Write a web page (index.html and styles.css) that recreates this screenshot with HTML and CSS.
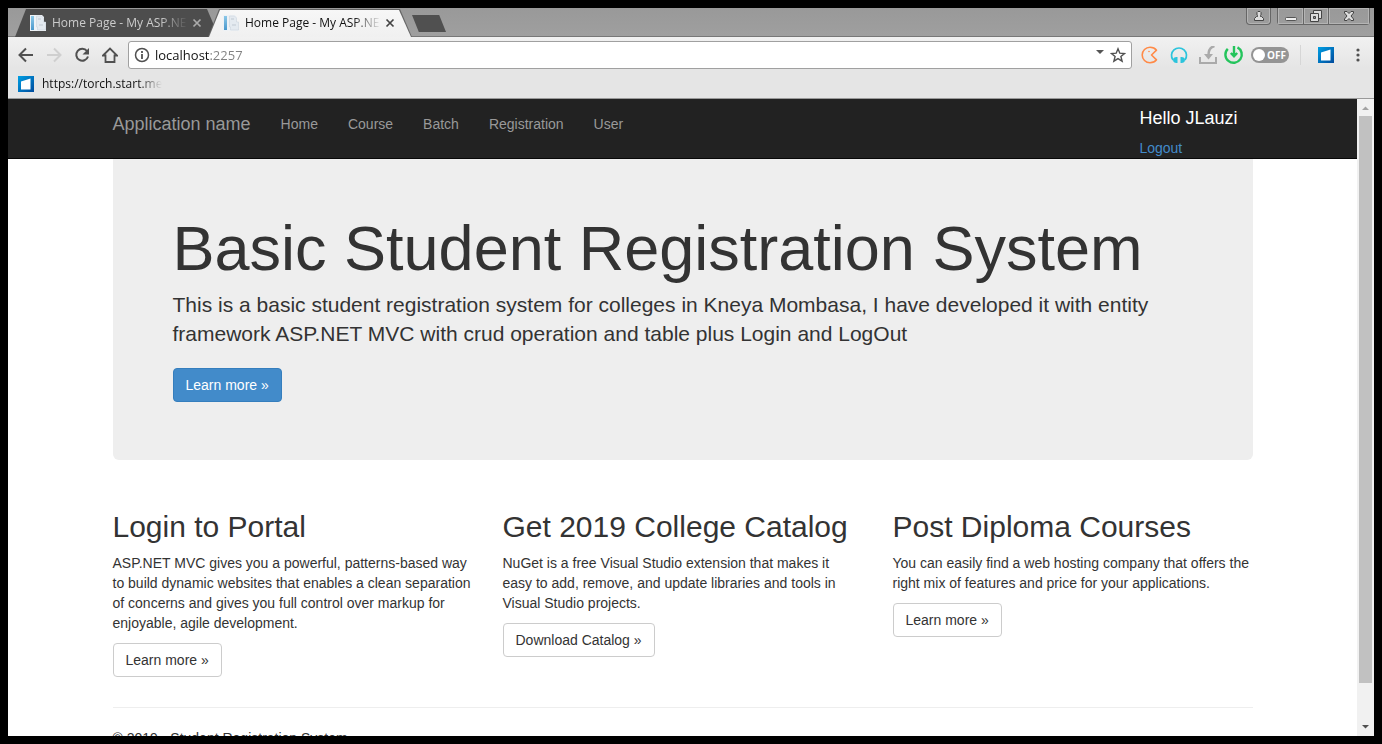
FILE: index.html
```
<!DOCTYPE html>
<html lang="en">
<head>
<meta charset="utf-8">
<title>Home Page - My ASP.NET Application</title>
<link rel="stylesheet" href="styles.css">
</head>
<body>
<svg class="defs" aria-hidden="true">
  <defs>
    <linearGradient id="blue" x1="0" y1="0" x2="1" y2="1"><stop offset="0" stop-color="#00a0e4"/><stop offset="1" stop-color="#004a9c"/></linearGradient>
    <linearGradient id="bar" x1="0" y1="0" x2="0" y2="1"><stop offset="0" stop-color="#8cc8e8"/><stop offset="1" stop-color="#4a98cc"/></linearGradient>
    <symbol id="site" viewBox="0 0 16 16">
      <path d="M0 0h12l2 2v5h2v9H0z" fill="#eef2f6"/>
      <path d="M1 1h3v14H1z" fill="url(#bar)"/>
      <path d="M6.500 1h5l2 2v4h2v8h-8v-3h-1z" fill="#e4eaf0" stroke="#cdd5dd" stroke-width=".6"/>
      <path d="M8 4h3M9 10h4" stroke="#c0c9d2"/>
    </symbol>
    <symbol id="torch" viewBox="0 0 16 16"><path d="M0 0h16v16H0z" fill="url(#blue)"/><path d="M3 5.500l9.500-3V13.500H3z" fill="#fff"/></symbol>
    <symbol id="x" viewBox="0 0 10 10"><path d="M1.500 1.500l7 7m0-7l-7 7" fill="none" stroke="currentColor" stroke-width="1.700"/></symbol>
  </defs>
</svg>
<div class="window">
  <header class="chrome">
    <div class="tabstrip">
      <div class="tab">
        <svg class="i16"><use href="#site"/></svg>
        <span class="tab-title">Home Page - My ASP.NE</span>
        <button class="plain close" aria-label="Close tab"><svg class="i10"><use href="#x"/></svg></button>
      </div>
      <div class="tab active">
        <svg class="i16"><use href="#site"/></svg>
        <span class="tab-title">Home Page - My ASP.NE</span>
        <button class="plain close" aria-label="Close tab"><svg class="i10"><use href="#x"/></svg></button>
      </div>
      <button class="plain newtab" aria-label="New tab"></button>
      <div class="controls">
        <button class="plain ctl user" aria-label="User"><svg width="12" height="12" viewBox="0 0 12 12" fill="#ddd" stroke="#444"><path d="M1.500 10.500v-2l2-2h1V5.500l-.5-.5V2.500l1-1h2l1 1V5l-.5.500v1h1l2 2v2z"/></svg></button>
        <div class="ctl-group">
          <button class="plain ctl" aria-label="Minimise"><svg width="14" height="12" viewBox="0 0 14 12" fill="#eee" stroke="#555"><rect x="1.500" y="7.500" width="11" height="3" rx="1"/></svg></button>
          <button class="plain ctl" aria-label="Restore"><svg width="14" height="14" viewBox="0 0 14 14" fill="#ddd" stroke="#444"><path d="M4.500 1.500h8v8h-8z"/><path d="M1.500 4.500h8v8h-8z"/><path d="M4.500 7.500h2v2h-2z" fill="#999"/></svg></button>
          <button class="plain ctl wide" aria-label="Close"><svg width="12" height="12" viewBox="0 0 12 12" fill="#ddd" stroke="#444"><path d="M1.500 1.500h2.500l2 2 2-2h2.500v1.500L8 6l2.500 3v1.500H8l-2-2-2 2H1.500V9L4 6 1.500 3z"/></svg></button>
        </div>
      </div>
    </div>
    <div class="toolbar">
      <nav class="navbtns" aria-label="Browser">
        <button class="plain" aria-label="Back"><svg class="i16" viewBox="0 0 16 16" fill="none" stroke="#505050" stroke-width="2"><path d="M15 8H2M8 1.500L1.500 8 8 14.500"/></svg></button>
        <button class="plain" aria-label="Forward"><svg class="i16" viewBox="0 0 16 16" fill="none" stroke="#cfcfcf" stroke-width="2"><path d="M1 8h13M8 1.500L14.500 8 8 14.500"/></svg></button>
        <button class="plain" aria-label="Reload"><svg class="i16" viewBox="0 0 16 16"><path d="M13 4A6 6 0 1 0 14 9.500" fill="none" stroke="#505050" stroke-width="2"/><path d="M15 1v6.500H8.500z" fill="#505050"/></svg></button>
        <button class="plain" aria-label="Home page"><svg class="i16" viewBox="0 0 16 16" fill="none" stroke="#505050" stroke-width="1.800"><path d="M1 8.500L8 1.500l7 7h-2.500V15h-9V8.500z"/></svg></button>
      </nav>
      <div class="omnibox">
        <svg class="i16" viewBox="0 0 16 16" fill="none" stroke="#505050" stroke-width="1.500"><circle cx="8" cy="8" r="6.500"/><path d="M8 7v5M8 4v2" stroke-width="1.800"/></svg>
        <input class="url" type="text" aria-label="Address" value="localhost:2257">
        <svg width="8" height="4" viewBox="0 0 8 4" class="drop"><path d="M0 0h8L4 4z" fill="#555"/></svg>
        <button class="plain" aria-label="Bookmark"><svg class="i16" viewBox="0 0 16 16" fill="none" stroke="#505050" stroke-width="1.400"><path d="M8 1.800l1.800 4.400 4.700.3-3.600 3 1.200 4.700L8 11.600l-4.100 2.600 1.200-4.700-3.600-3 4.700-.3z"/></svg></button>
      </div>
      <div class="exts">
        <button class="plain" aria-label="Games"><svg class="i18" viewBox="0 0 18 18" fill="none" stroke="#ff8a47" stroke-width="1.600"><path d="M15.500 4.200C13.500 1.500 11 1.200 9 1.200a7.500 7.500 0 0 0 0 15.600c2 0 4.500-.3 6.500-3L10.500 9z" stroke-linejoin="round"/><circle cx="8" cy="5.500" r=".8" fill="#ff8a47" stroke="none"/></svg></button>
        <button class="plain" aria-label="Music"><svg class="i18" viewBox="0 0 18 18"><path d="M3 14A7.500 7.500 0 1 1 15 14" fill="none" stroke="#2cc4dc" stroke-width="1.700"/><path d="M7.500 11v6H6.500C4.500 17 3 15.800 3 14s1.500-3 3.500-3zM10.500 11v6h1c2 0 3.500-1.200 3.500-3s-1.500-3-3.500-3z" fill="#2cc4dc"/></svg></button>
        <button class="plain" aria-label="Media download"><svg class="i18" viewBox="0 0 18 18" fill="none" stroke="#aaa" stroke-width="2"><path d="M1 11v6h16v-6"/><path d="M15.500 0c-4 1-6 4-6 9" stroke-width="2.400"/><path d="M5 8h9l-4.500 5.500z" fill="#aaa" stroke="none"/></svg></button>
        <button class="plain" aria-label="Downloads"><svg class="i20" viewBox="0 0 20 20" fill="none" stroke="#24c45c" stroke-width="2.400"><path d="M3.800 3.800A8.200 8.200 0 1 0 13.500 2.400M10 1v9.500M6.800 8L10 11.200 13.200 8"/></svg></button>
        <button class="plain toggle" aria-label="Toggle"><span class="knob"></span>OFF</button>
        <span class="sep"></span>
        <button class="plain torch" aria-label="Torch"><svg class="i16"><use href="#torch"/></svg></button>
        <button class="plain" aria-label="Menu"><svg width="4" height="16" viewBox="0 0 4 16" fill="#505050"><circle cx="2" cy="3" r="1.600"/><circle cx="2" cy="8" r="1.600"/><circle cx="2" cy="13" r="1.600"/></svg></button>
      </div>
    </div>
    <div class="bookmarks">
      <a class="bookmark" href="#"><svg class="i16"><use href="#torch"/></svg><span class="bookmark-title">https://torch.start.me</span></a>
    </div>
  </header>
  <div class="viewport">
    <div class="page">
      <nav class="navbar">
        <div class="container bar">
          <a class="brand" href="#">Application name</a>
          <ul class="links">
            <li><a href="#">Home</a></li>
            <li><a href="#">Course</a></li>
            <li><a href="#">Batch</a></li>
            <li><a href="#">Registration</a></li>
            <li><a href="#">User</a></li>
          </ul>
          <div class="account">
            <span class="hello">Hello JLauzi</span>
            <a class="logout" href="#">Logout</a>
          </div>
        </div>
      </nav>
      <main class="container">
        <section class="jumbotron">
          <h1>Basic Student Registration System</h1>
          <p class="lead">This is a basic student registration system for colleges in Kneya Mombasa, I have developed it with entity framework ASP.NET MVC with crud operation and table plus Login and LogOut</p>
          <a class="btn primary" href="#">Learn more »</a>
        </section>
        <div class="columns">
          <section>
            <h2>Login to Portal</h2>
            <p>ASP.NET MVC gives you a powerful, patterns-based way to build dynamic websites that enables a clean separation of concerns and gives you full control over markup for enjoyable, agile development.</p>
            <a class="btn" href="#">Learn more »</a>
          </section>
          <section>
            <h2>Get 2019 College Catalog</h2>
            <p>NuGet is a free Visual Studio extension that makes it easy to add, remove, and update libraries and tools in Visual Studio projects.</p>
            <a class="btn" href="#">Download Catalog »</a>
          </section>
          <section>
            <h2>Post Diploma Courses</h2>
            <p>You can easily find a web hosting company that offers the right mix of features and price for your applications.</p>
            <a class="btn" href="#">Learn more »</a>
          </section>
        </div>
        <footer class="footer"><p>© 2019 - Student Registration System</p></footer>
      </main>
    </div>
    <div class="scrollbar" aria-hidden="true">
      <svg class="arrow" viewBox="0 0 17 17"><path d="M5 11h7L8.500 7.500z" fill="#a3a3a3"/></svg>
      <div class="track"><div class="thumb"></div></div>
      <svg class="arrow" viewBox="0 0 17 17"><path d="M5 6h7L8.500 9.500z" fill="#505050"/></svg>
    </div>
  </div>
</div>
</body>
</html>
```
FILE: styles.css
```
* { box-sizing: border-box; }
body {
  margin: 0;
  background: #000;
  color: #333;
  font: 14px/20px "Liberation Sans", Arial, sans-serif;
}
a { text-decoration: none; color: inherit; }
svg { display: block; flex: none; }
h1, h2, p, ul { margin: 0; padding: 0; font-weight: 400; }
.defs { position: absolute; width: 0; height: 0; }
.i10 { width: 10px; height: 10px; }
.i16 { width: 16px; height: 16px; }
.i18 { width: 18px; height: 18px; }
.i20 { width: 20px; height: 20px; }
.plain { border: 0; padding: 0; background: none; font: inherit; color: inherit; }

.window {
  display: flex;
  flex-direction: column;
  height: 100vh;
  padding: 8px;
}

/* Browser chrome */
.chrome {
  flex: none;
  background: linear-gradient(#f1f1f1 29px, #e5e5e5 60px);
  border-bottom: 1px solid #999;
  color: #111;
  font: 12px/16px "Open Sans", "Noto Sans", sans-serif;
}
.tabstrip {
  display: flex;
  height: 29px;
  padding-left: 7px;
  background: linear-gradient(#999, #9f9f9f);
  border-bottom: 1px solid #777;
}
.tab {
  display: flex;
  align-items: center;
  width: 204px;
  height: 28px;
  margin-top: 1px;
  padding: 0 17px 0 15px;
  background: #4d4d4d;
  color: #ccc;
  clip-path: polygon(11px 0, calc(100% - 12px) 0, 100% 100%, 0 100%);
}
.tab.active {
  position: relative;
  z-index: 1;
  margin-left: -11px;
  background: #666;
  color: #111;
}
.tab.active::before {
  content: "";
  position: absolute;
  z-index: -1;
  inset: 1px 1px 0;
  background: linear-gradient(#f7f7f7, #f0f0f0);
  clip-path: polygon(11px 0, calc(100% - 12px) 0, 100% 100%, 0 100%);
}
.tab-title {
  flex: 1;
  min-width: 0;
  margin: 0 4px 0 6px;
  white-space: nowrap;
  mask-image: linear-gradient(to right, #000 calc(100% - 28px), transparent);
}
.close { color: #aaa; }
.active .close { color: #444; }
.newtab {
  width: 34px;
  height: 17px;
  margin: 7px 0 0;
  background: #505050;
  clip-path: polygon(0 0, 80% 0, 100% 100%, 20% 100%);
}
.controls { display: flex; gap: 6px; margin: 0 4px 0 auto; align-items: flex-start; }
.ctl-group { display: flex; border: 1px solid #666; border-top: 0; border-radius: 0 0 4px 4px; }
.ctl { display: grid; place-items: center; width: 25px; height: 16px; box-shadow: inset 0 0 0 1px #b4b4b4; }
.ctl + .ctl { border-left: 1px solid #666; }
.ctl.wide { width: 41px; }
.ctl.user { height: 17px; border: 1px solid #666; border-top: 0; border-radius: 0 0 4px 4px; }

.toolbar { display: flex; align-items: center; height: 36px; padding: 0 14px 0 10px; }
.navbtns { display: flex; align-items: center; gap: 12px; margin-right: 10px; }
.omnibox {
  display: flex;
  flex: 1;
  align-items: center;
  height: 28px;
  padding: 0 5px;
  background: #fff;
  border: 1px solid #a0a0a0;
  border-radius: 3px;
}
.url {
  flex: 1;
  min-width: 0;
  height: 24px;
  margin-left: 5px;
  padding: 0;
  border: 0;
  outline: 0;
  font: 13px/24px "Open Sans", "Noto Sans", sans-serif;
  color: transparent;
  background: linear-gradient(to right, #111 55px, #808080 55px);
  background-clip: text;
}
.drop { margin: 0 6px 6px 0; }
.exts { display: flex; align-items: center; gap: 11px; margin-left: 9px; }
.exts .i20 { margin: 0 -4px; }
.toggle {
  display: flex;
  align-items: center;
  gap: 2px;
  width: 38px;
  height: 16px;
  padding: 0 2px;
  border-radius: 8px;
  background: #949494;
  color: #fff;
  font-size: 10px;
  line-height: 16px;
  font-weight: 700;
}
.knob { flex: none; width: 12px; height: 12px; border-radius: 50%; background: #fff; }
.sep { width: 1px; height: 20px; background: #d6d6d6; }
.torch { margin: 0 11px 0 6px; }

.bookmarks { display: flex; height: 25px; padding: 3px 10px 0; align-items: flex-start; }
.bookmark { display: flex; gap: 8px; align-items: center; }
.bookmark-title {
  white-space: nowrap;
  mask-image: linear-gradient(to right, #000 calc(100% - 24px), transparent);
}

/* Web page */
.viewport { display: flex; flex: 1; min-height: 0; background: #fff; }
.page { flex: 1; min-width: 0; overflow: hidden; }
.container { max-width: 1170px; margin: 0 auto; padding: 0 15px; }
.navbar { background: #222; border-bottom: 1px solid #080808; color: #999; }
.bar { display: flex; min-height: 59px; }
.brand { padding: 15px 0; margin-right: 15px; font-size: 18px; }
.links { display: flex; list-style: none; }
.links a { display: block; padding: 15px; }
.account { display: flex; flex-direction: column; gap: 10px; margin: 9px 15px 0 auto; }
.hello { color: #fff; font-size: 18px; }
.logout { color: #428bca; }

.jumbotron {
  padding: 58px 60px;
  margin-bottom: 50px;
  background: #eee;
  border-radius: 0 0 6px 6px;
}
h1 { font-size: 63px; line-height: 63px; margin-bottom: 10px; }
.lead { font-size: 21px; line-height: 29px; margin-bottom: 20px; }
.btn {
  display: inline-block;
  padding: 6px 12px;
  border: 1px solid #ccc;
  border-radius: 4px;
  background: #fff;
  color: #333;
  vertical-align: top;
}
.btn.primary { background: #428bca; border-color: #357ebd; color: #fff; }
.columns { display: grid; grid-template-columns: repeat(3, 1fr); gap: 30px; }
h2 { font-size: 30px; line-height: 33px; margin-bottom: 10px; }
.columns p { margin-bottom: 10px; }
.footer { margin-top: 30px; padding-top: 20px; border-top: 1px solid #eee; }

.scrollbar { display: flex; flex-direction: column; width: 17px; background: #f1f1f1; }
.arrow { width: 17px; height: 17px; }
.track { flex: 1; padding: 0 2px; }
.thumb { height: 94%; background: #c1c1c1; }
```
